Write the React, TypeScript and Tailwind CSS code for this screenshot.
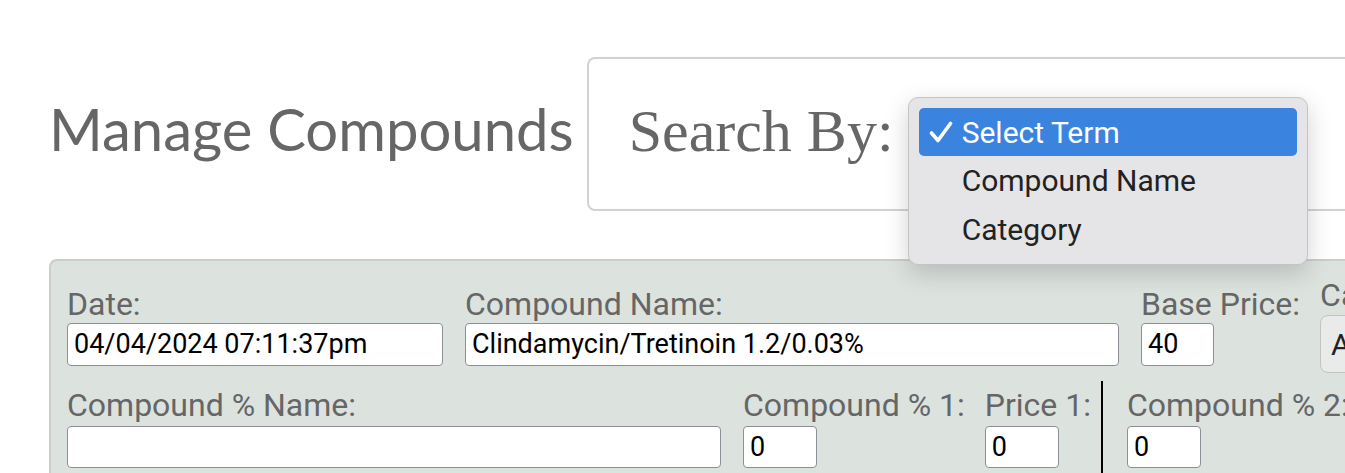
import React from "react";

const roboto = { fontFamily: "Roboto, 'Liberation Sans', sans-serif" } as const;

function Field({
  label,
  value,
  width,
}: {
  label: string;
  value: string;
  width: string;
}) {
  return (
    <div className="flex flex-col shrink-0">
      <div className="text-[32px] leading-[36px] text-[#666] whitespace-nowrap">{label}</div>
      <div
        className={`mt-[1px] h-[43px] ${width} bg-white border-[1.5px] border-[#8e8e98] rounded-[4px] px-[6px] flex items-center text-[27px] text-black whitespace-nowrap overflow-hidden`}
      >
        {value}
      </div>
    </div>
  );
}

function SmallField({ label, value }: { label: string; value: string }) {
  return (
    <div className="flex flex-col shrink-0">
      <div className="text-[32px] leading-[36px] text-[#666] whitespace-nowrap">{label}</div>
      <div className="mt-[3px] h-[42px] w-[74px] bg-white border-[1.5px] border-[#8e8e98] rounded-[4px] px-[6px] flex items-center text-[27px] text-black">
        {value}
      </div>
    </div>
  );
}

export default function App() {
  return (
    <div className="w-[1345px] h-[473px] overflow-hidden bg-white relative" style={roboto}>
      <div className="flex items-center pl-[49px] pt-[57px]">
        <h1
          className="text-[58px] leading-none text-[#666] whitespace-nowrap pb-[10px]"
          style={{ fontFamily: "Lato, 'Open Sans', sans-serif" }}
        >
          Manage Compounds
        </h1>
        <div className="ml-[13px] relative h-[154px] w-[900px] shrink-0 border-2 border-[#d2d2d2] rounded-[8px] flex items-center pl-[40px]">
          <span
            className="text-[60px] leading-none text-[#666] pb-[6px]"
            style={{ fontFamily: "'Liberation Serif', 'Times New Roman', serif" }}
          >
            Search By:
          </span>
          <div className="absolute z-10 left-[319px] top-[38px] w-[400px] h-[168px] bg-[#e5e5e7] border border-[#c4c4c6] rounded-[10px] p-[10px] shadow-[0_8px_24px_rgba(0,0,0,0.18)]">
            <div className="h-[48px] rounded-[5px] bg-[#3a84e0] flex items-center text-white text-[30px]">
              <svg className="ml-[10px] w-[24px] h-[24px]" viewBox="0 0 24 24" fill="none">
                <path d="M2.5 13 L9 20.5 L21.5 3.5" stroke="white" strokeWidth="3.6" strokeLinecap="round" strokeLinejoin="round" />
              </svg>
              <span className="ml-[9px]">Select Term</span>
            </div>
            <div className="h-[49px] flex items-center pl-[43px] text-[30px] text-[#222]">Compound Name</div>
            <div className="h-[49px] flex items-center pl-[43px] text-[30px] text-[#222]">Category</div>
          </div>
        </div>
      </div>

      <div className="mt-[48px] ml-[49px] w-[1400px] h-[300px] bg-[#dce3df] border-2 border-[#c9cecb] rounded-[8px] pt-[25px] pl-4">
        <div className="flex">
          <Field label="Date:" value="04/04/2024 07:11:37pm" width="w-[376px]" />
          <div className="ml-[22px]">
            <Field label="Compound Name:" value="Clindamycin/Tretinoin 1.2/0.03%" width="w-[654px]" />
          </div>
          <div className="ml-[22px]">
            <Field label="Base Price:" value="40" width="w-[73px]" />
          </div>
          <div className="flex flex-col shrink-0 -mt-[9px] ml-[20px]">
            <div className="text-[32px] leading-[36px] text-[#666] whitespace-nowrap">Ca</div>
            <div className="mt-[2px] h-[58px] w-[200px] bg-[#e9ebea] border-[1.5px] border-[#c2c4c3] rounded-[8px] px-[10px] flex items-center text-[30px] text-[#222]">
              A
            </div>
          </div>
        </div>
        <div className="flex mt-[14px]">
          <div className="flex flex-col shrink-0">
            <div className="text-[32px] leading-[36px] text-[#666] whitespace-nowrap">Compound % Name:</div>
            <div className="mt-[3px] h-[42px] w-[654px] bg-white border-[1.5px] border-[#8e8e98] rounded-[4px]" />
          </div>
          <div className="ml-[22px]">
            <SmallField label="Compound % 1:" value="0" />
          </div>
          <div className="ml-[20px]">
            <SmallField label="Price 1:" value="0" />
          </div>
          <div className="ml-[10px] w-[2px] bg-black -mt-[6px] h-[200px] shrink-0" />
          <div className="ml-[24px]">
            <SmallField label="Compound % 2:" value="0" />
          </div>
        </div>
      </div>
    </div>
  );
}
